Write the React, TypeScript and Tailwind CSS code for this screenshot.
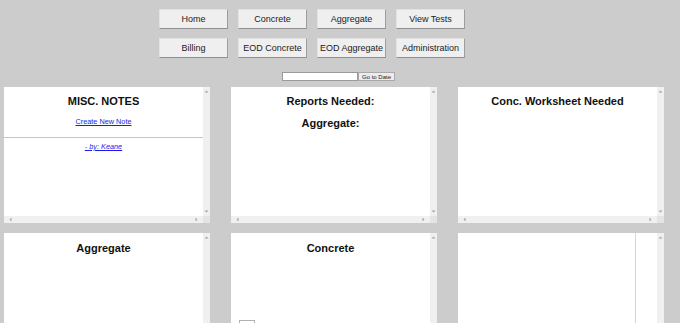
import React from "react";

type Dir = "up" | "down" | "left" | "right";
const pts: Record<Dir, string> = {
  up: "3.5,2.5 1.5,4.5 5.5,4.5",
  down: "1.5,2.5 5.5,2.5 3.5,4.5",
  left: "2.5,3.5 4.5,1.5 4.5,5.5",
  right: "2.5,1.5 2.5,5.5 4.5,3.5",
};
function Arrow({ dir }: { dir: Dir }) {
  return (
    <svg width="7" height="7" viewBox="0 0 7 7" className="block shrink-0">
      <polygon points={pts[dir]} fill="#a6a6a6" />
    </svg>
  );
}

function Panel({ children, hscroll = true }: { children?: React.ReactNode; hscroll?: boolean }) {
  return (
    <div className="flex h-[136px] w-[206px] flex-col bg-white">
      <div className="flex min-h-0 flex-1">
        <div className="min-w-0 flex-1 overflow-hidden">{children}</div>
        <div className="flex w-[7px] flex-col justify-between bg-[#f0f0f0] py-[1px]">
          <Arrow dir="up" />
          {hscroll && <Arrow dir="down" />}
        </div>
      </div>
      {hscroll && (
        <div className="flex h-[7px]">
          <div className="flex flex-1 items-center justify-between bg-[#f0f0f0] px-[3px]">
            <Arrow dir="left" />
            <Arrow dir="right" />
          </div>
          <div className="w-[7px] bg-[#e4e4e4]" />
        </div>
      )}
    </div>
  );
}

function Btn({ label }: { label: string }) {
  return (
    <div className="flex h-[20px] w-[69px] items-center justify-center border border-b-[#8f8f8f] border-l-[#e2e2e2] border-r-[#9d9d9d] border-t-[#e2e2e2] bg-[#efefef] text-[9px] leading-none text-[#222]">
      {label}
    </div>
  );
}

function H({ children }: { children: React.ReactNode }) {
  return <div className="text-center text-[11px] font-bold leading-[13px] text-[#111]">{children}</div>;
}

export default function App() {
  return (
    <div
      className="h-[323px] w-[680px] overflow-hidden bg-[#cccccc] pt-[9px]"
      style={{ fontFamily: '"Liberation Sans", Arial, sans-serif' }}
    >
      <div className="flex flex-col gap-[9px] pl-[159px]">
        <div className="flex gap-[10px]">
          <Btn label="Home" />
          <Btn label="Concrete" />
          <Btn label="Aggregate" />
          <Btn label="View Tests" />
        </div>
        <div className="flex gap-[10px]">
          <Btn label="Billing" />
          <Btn label="EOD Concrete" />
          <Btn label="EOD Aggregate" />
          <Btn label="Administration" />
        </div>
      </div>
      <div className="mt-[14px] flex pl-[282px]">
        <div className="h-[9px] w-[76px] border border-[#9a9a9a] bg-white" />
        <div className="flex h-[9px] w-[37px] items-center justify-center border border-[#a9a9a9] bg-[#ececec] text-[6px] leading-none text-[#222]">
          Go to Date
        </div>
      </div>
      <div className="mt-[6px] flex flex-col gap-[10px] pl-[4px]">
        <div className="flex gap-[21px]">
          <Panel>
            <div className="flex flex-col pt-[8px]">
              <H>MISC. NOTES</H>
              <div className="mt-[9px] text-center text-[7.3px] leading-[9px] text-[#1a1aee] underline">Create New Note</div>
              <div className="mt-[11px] h-px bg-[#c4c4c4]" />
              <div className="mt-[4px] text-center text-[7.3px] italic leading-[9px] text-[#1a1aee] underline">- by: Keane</div>
            </div>
          </Panel>
          <Panel>
            <div className="flex flex-col gap-[9px] pt-[8px]">
              <H>Reports Needed:</H>
              <H>Aggregate:</H>
            </div>
          </Panel>
          <Panel>
            <div className="pt-[8px]">
              <H>Conc. Worksheet Needed</H>
            </div>
          </Panel>
        </div>
        <div className="flex gap-[21px]">
          <Panel hscroll={false}>
            <div className="pt-[9px]">
              <H>Aggregate</H>
            </div>
          </Panel>
          <Panel hscroll={false}>
            <div className="flex flex-col pt-[9px]">
              <H>Concrete</H>
              <div className="ml-[8px] mt-[65px] h-[10px] w-[16px] border border-[#b0b0b0] bg-white" />
            </div>
          </Panel>
          <Panel hscroll={false}>
            <div className="h-full w-[178px] border-r border-[#d6d6d6] bg-white" />
          </Panel>
        </div>
      </div>
    </div>
  );
}
